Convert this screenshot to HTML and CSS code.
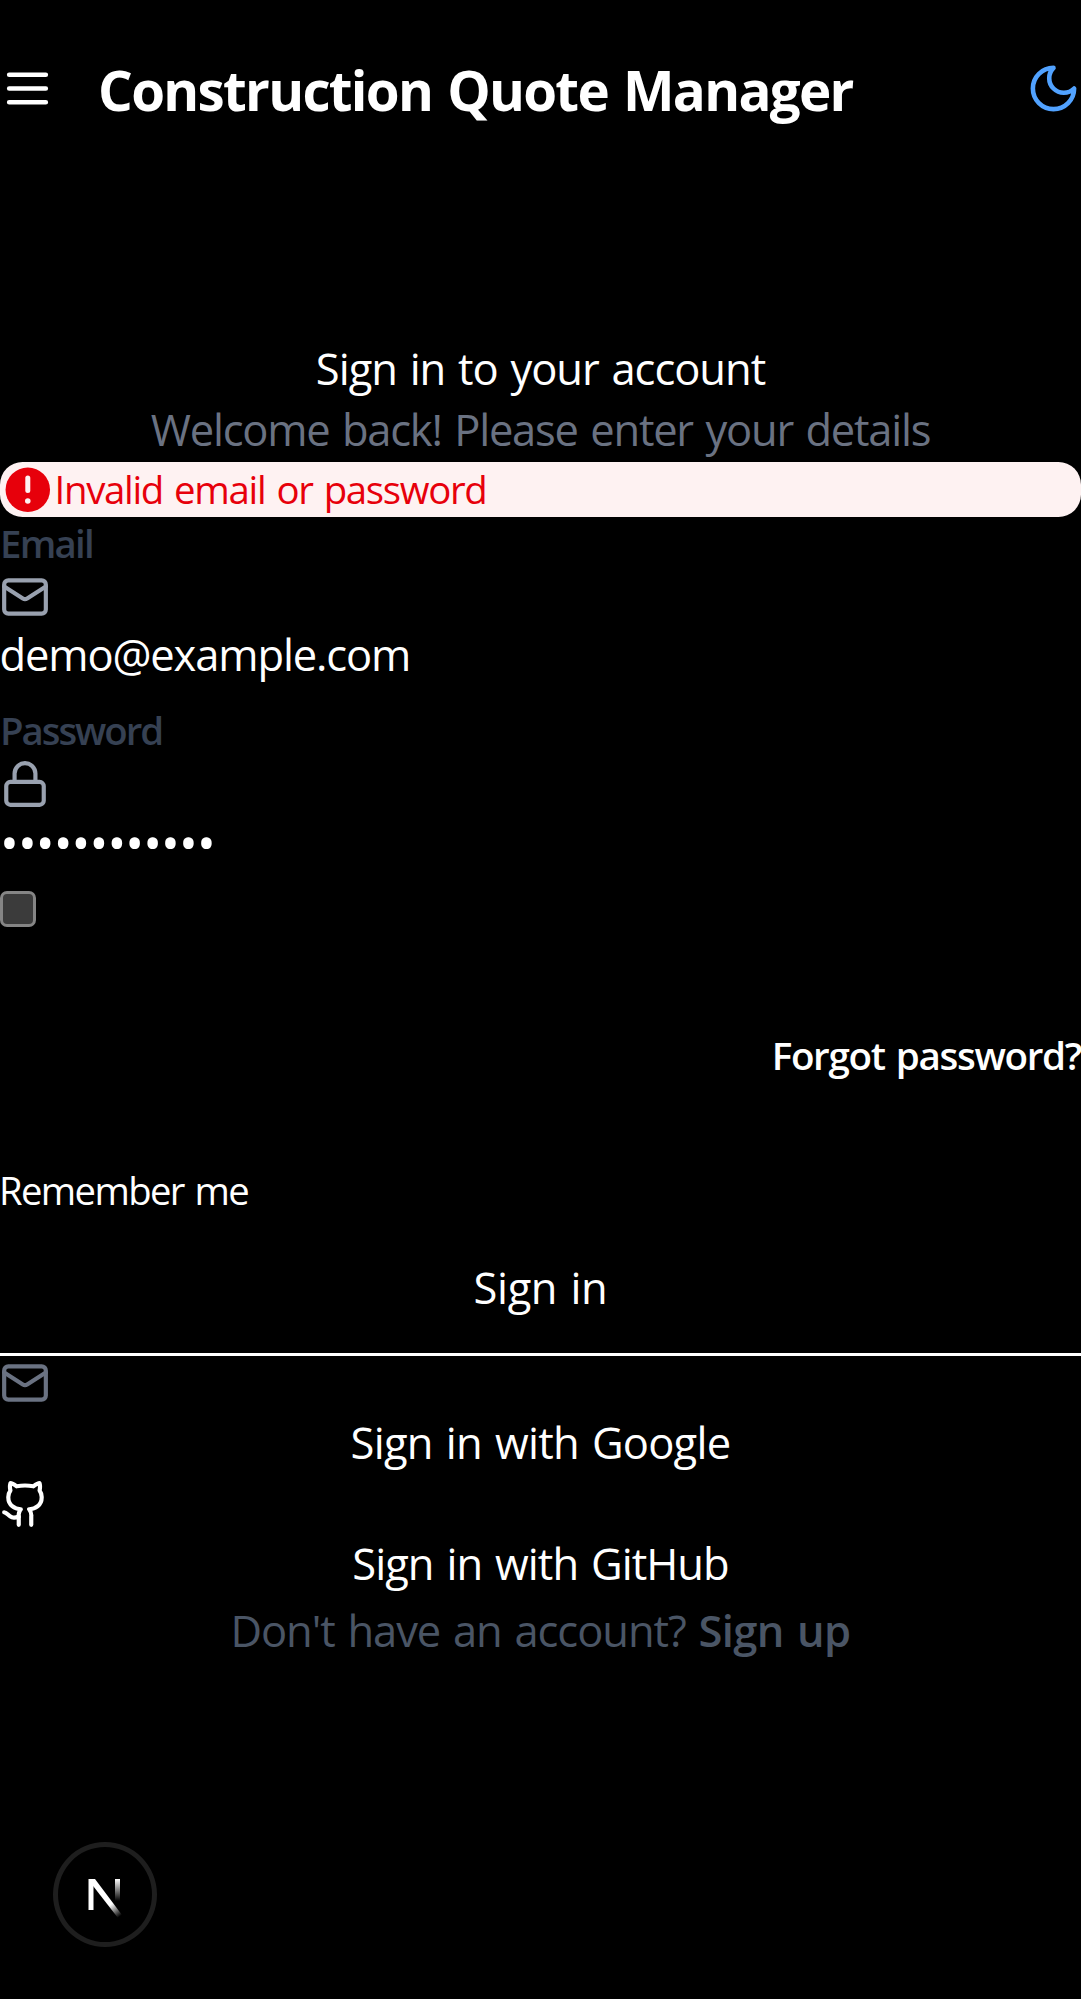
FILE: index.html
```html
<!DOCTYPE html>
<html lang="en">
<head>
<meta charset="utf-8">
<title>Construction Quote Manager</title>
<link rel="stylesheet" href="styles.css">
</head>
<body>
<header class="header">
  <svg class="icon-lg" viewBox="0 0 24 24"><path d="M4 6h16M4 12h16M4 18h16"/></svg>
  <h1 class="title">Construction Quote Manager</h1>
  <svg class="icon-lg moon" viewBox="0 0 24 24"><path d="M12 3a6 6 0 0 0 9 9 9 9 0 1 1-9-9Z"/></svg>
</header>
<main class="main">
  <h2 class="row center heading">Sign in to your account</h2>
  <p class="row center welcome">Welcome back! Please enter your details</p>
  <div class="alert">
    <svg class="alert-icon" viewBox="0 0 20 20"><circle cx="10" cy="10" r="8"/><path d="M10 5.75v4.5"/><circle class="dot" cx="10" cy="14" r="1"/></svg>
    <span class="alert-text">Invalid email or password</span>
  </div>
  <form class="form">
    <label class="label email-label">Email</label>
    <svg class="icon muted" viewBox="0 0 24 24"><rect x="2" y="4" width="20" height="16" rx="2"/><path d="m22 7-8.97 5.7a1.94 1.94 0 0 1-2.06 0L2 7"/></svg>
    <div class="field email">demo@example.com</div>
    <label class="label password-label">Password</label>
    <svg class="icon muted lock" viewBox="0 0 24 24"><rect x="3" y="11" width="18" height="11" rx="2"/><path d="M7 11V7a5 5 0 0 1 10 0v4"/></svg>
    <div class="field password">••••••••••••</div>
    <span class="checkbox"></span>
    <a class="forgot">Forgot password?</a>
    <span class="remember">Remember me</span>
    <button type="button" class="row signin">Sign in</button>
  </form>
  <div class="divider"></div>
  <svg class="icon mail" viewBox="0 0 24 24"><rect x="2" y="4" width="20" height="16" rx="2"/><path d="m22 7-8.97 5.7a1.94 1.94 0 0 1-2.06 0L2 7"/></svg>
  <button type="button" class="row google">Sign in with Google</button>
  <svg class="icon github-icon" viewBox="0 0 24 24"><path d="M15 22v-4a4.8 4.8 0 0 0-1-3.5c3 0 6-2 6-5.5.08-1.25-.27-2.48-1-3.5.28-1.15.28-2.35 0-3.5 0 0-1 0-3 1.5-2.64-.5-5.36-.5-8 0C6 2 5 2 5 2c-.3 1.15-.3 2.35 0 3.5A5.403 5.403 0 0 0 4 9c0 3.5 3 5.5 6 5.5-.39.49-.68 1.05-.85 1.65-.17.6-.22 1.23-.15 1.85v4"/><path d="M9 18c-4.51 2-5-2-7-2"/></svg>
  <button type="button" class="row github">Sign in with GitHub</button>
  <p class="row center signup"><span class="ask">Don't have an account? </span><b class="join">Sign up</b></p>
</main>
<div class="badge">
  <svg class="badge-mark" viewBox="0 0 40 44">
    <defs>
      <linearGradient id="stem" x1="0" y1="3" x2="0" y2="25" gradientUnits="userSpaceOnUse"><stop offset="0" stop-color="#fff"/><stop offset="1" stop-color="#fff" stop-opacity="0"/></linearGradient>
      <linearGradient id="slash" x1="24" y1="29" x2="33" y2="41" gradientUnits="userSpaceOnUse"><stop offset="0" stop-color="#fff"/><stop offset="1" stop-color="#fff" stop-opacity="0"/></linearGradient>
    </defs>
    <path fill="#fff" d="M2.5 3h5v31h-5z"/>
    <path fill="url(#slash)" d="M4 3h5l27 36-4 3L4 6z"/>
    <path fill="url(#stem)" d="M29 3h5v22h-5z"/>
  </svg>
</div>
</body>
</html>
```
FILE: styles.css
```css
* { box-sizing: border-box; margin: 0; padding: 0; }

body {
  height: 1999px;
  background: #000;
  color: #fff;
  font-family: "Open Sans", "Noto Sans", sans-serif;
  font-size: 43.5px;
  white-space: nowrap;
  word-spacing: 2.5px;
  overflow: hidden;
}

svg {
  display: block;
  flex: none;
  fill: none;
  stroke: currentColor;
  stroke-width: 2;
  stroke-linecap: round;
  stroke-linejoin: round;
}

.header { display: flex; align-items: center; height: 176px; }
.icon-lg { width: 55px; height: 55px; }
.title { flex: 1; padding-top: 3px; margin-left: 43px; font-size: 54.7px; font-weight: 700; letter-spacing: -1.71px; }
.moon { color: #51a2ff; }

.main { display: flex; flex-direction: column; padding-top: 161px; }
.row { height: 61px; line-height: 63px; font-size: 43.5px; font-weight: 400; }
.center { text-align: center; }
.heading { letter-spacing: -1.03px; }
.welcome { color: #6a7282; letter-spacing: -1.24px; }

.alert {
  display: flex;
  align-items: center;
  height: 55px;
  margin-top: 3px;
  border-radius: 22.5px;
  background: #fef2f2;
  color: #e7000b;
}
.alert-icon { width: 55.6px; height: 55.6px; fill: currentColor; stroke: none; }
.alert-icon path { stroke: #fef2f2; stroke-width: 1.8; }
.alert-icon .dot { fill: #fef2f2; }
.alert-text { margin-left: -1px; padding-bottom: 2px; font-size: 38.4px; letter-spacing: -1.33px; }

.form { display: flex; flex-direction: column; }
.label { height: 52px; line-height: 53px; font-size: 38.4px; font-weight: 600; color: #364153; }
.email-label { letter-spacing: -1.75px; }
.password-label { margin-top: 19px; letter-spacing: -2.05px; }
.icon { width: 50px; height: 50px; }
.muted { margin-top: 3px; color: #99a1af; }
.field { height: 63px; line-height: 65px; }
.email { margin-left: -0.5px; letter-spacing: -1.13px; }
.password { height: 67px; line-height: 67px; font-size: 50px; letter-spacing: -0.9px; }

.checkbox {
  width: 36px;
  height: 36px;
  margin-top: 15px;
  border: 3px solid #858585;
  border-radius: 7px;
  background: #3b3b3b;
}
.forgot {
  align-self: flex-end;
  height: 52px;
  line-height: 52px;
  margin-top: 102px;
  font-size: 38.6px;
  font-weight: 600;
  letter-spacing: -1.33px;
}
.remember { height: 52px; line-height: 52px; margin: 83px 0 0 -1px; font-size: 38.2px; letter-spacing: -1.6px; }

button { border: 0; background: none; color: inherit; font-family: inherit; text-align: center; word-spacing: inherit; }
.signin { margin-top: 40px; letter-spacing: -0.4px; }
.divider { height: 3px; margin-top: 36px; background: #fff; }
.mail { margin-top: 2px; color: #6a7282; }
.google { margin-top: 3px; letter-spacing: -0.75px; }
.github-icon { margin-top: 7px; }
.github { margin-top: 3px; letter-spacing: -0.95px; }
.signup { margin-top: 6px; color: #4a5565; }
.ask { letter-spacing: -1.05px; }
.join { font-weight: 600; letter-spacing: -0.6px; }

/* Floating dev-tools button pinned over the page */
.badge {
  position: absolute;
  left: 52.5px;
  top: 1842px;
  display: flex;
  width: 104px;
  height: 105px;
  border: 5px solid #1e1e1e;
  border-radius: 50%;
}
.badge-mark { width: 40px; height: 44px; margin: 29px 0 0 28px; stroke: none; }
```
